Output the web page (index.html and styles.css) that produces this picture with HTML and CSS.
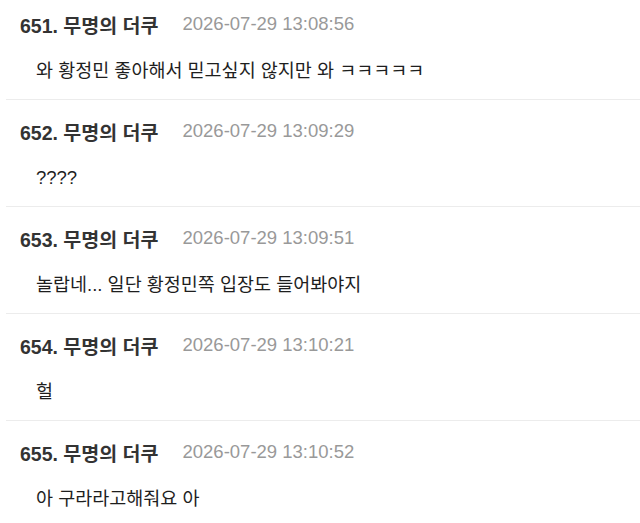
FILE: index.html
```html
<!DOCTYPE html>
<html lang="ko">

<head>
    <meta charset="UTF-8">
    <meta name="viewport" content="width=device-width, initial-scale=1.0">
    <title>댓글</title>
    <link rel="stylesheet" href="styles.css">
</head>

<body>
    <ul class="comment-list">
        <li class="comment">
            <div class="comment-head">
                <span class="comment-author">651. 무명의 더쿠</span>
                <span class="comment-date">2026-07-29 13:08:56</span>
            </div>
            <p class="comment-body">와 황정민 좋아해서 믿고싶지 않지만 와 ㅋㅋㅋㅋㅋ</p>
        </li>
        <li class="comment">
            <div class="comment-head">
                <span class="comment-author">652. 무명의 더쿠</span>
                <span class="comment-date">2026-07-29 13:09:29</span>
            </div>
            <p class="comment-body">????</p>
        </li>
        <li class="comment">
            <div class="comment-head">
                <span class="comment-author">653. 무명의 더쿠</span>
                <span class="comment-date">2026-07-29 13:09:51</span>
            </div>
            <p class="comment-body">놀랍네... 일단 황정민쪽 입장도 들어봐야지</p>
        </li>
        <li class="comment">
            <div class="comment-head">
                <span class="comment-author">654. 무명의 더쿠</span>
                <span class="comment-date">2026-07-29 13:10:21</span>
            </div>
            <p class="comment-body">헐</p>
        </li>
        <li class="comment">
            <div class="comment-head">
                <span class="comment-author">655. 무명의 더쿠</span>
                <span class="comment-date">2026-07-29 13:10:52</span>
            </div>
            <p class="comment-body">아 구라라고해줘요 아</p>
        </li>
    </ul>
</body>

</html>
```

FILE: styles.css
```css
body {
    margin: 0;
    background-color: #fff;
    font-family: "Liberation Sans", "Noto Sans CJK KR", sans-serif;
    overflow: hidden;
}

.comment-list {
    list-style: none;
    margin: 0;
    padding: 0 0 0 6px;
}

.comment {
    padding: 19px 0 16px 14px;
    border-bottom: 1px solid #ececec;
}

.comment:first-child {
    padding-top: 12px;
}

.comment-head {
    display: flex;
    align-items: center;
    gap: 24px;
    height: 24px;
}

.comment-author {
    font-size: 19.5px;
    font-weight: bold;
    color: #333;
}

.comment-date {
    font-size: 18.5px;
    color: #999;
}

.comment-body {
    margin: 23px 0 0 16px;
    font-size: 18.5px;
    line-height: 24px;
    color: #1e1e1e;
}
```
